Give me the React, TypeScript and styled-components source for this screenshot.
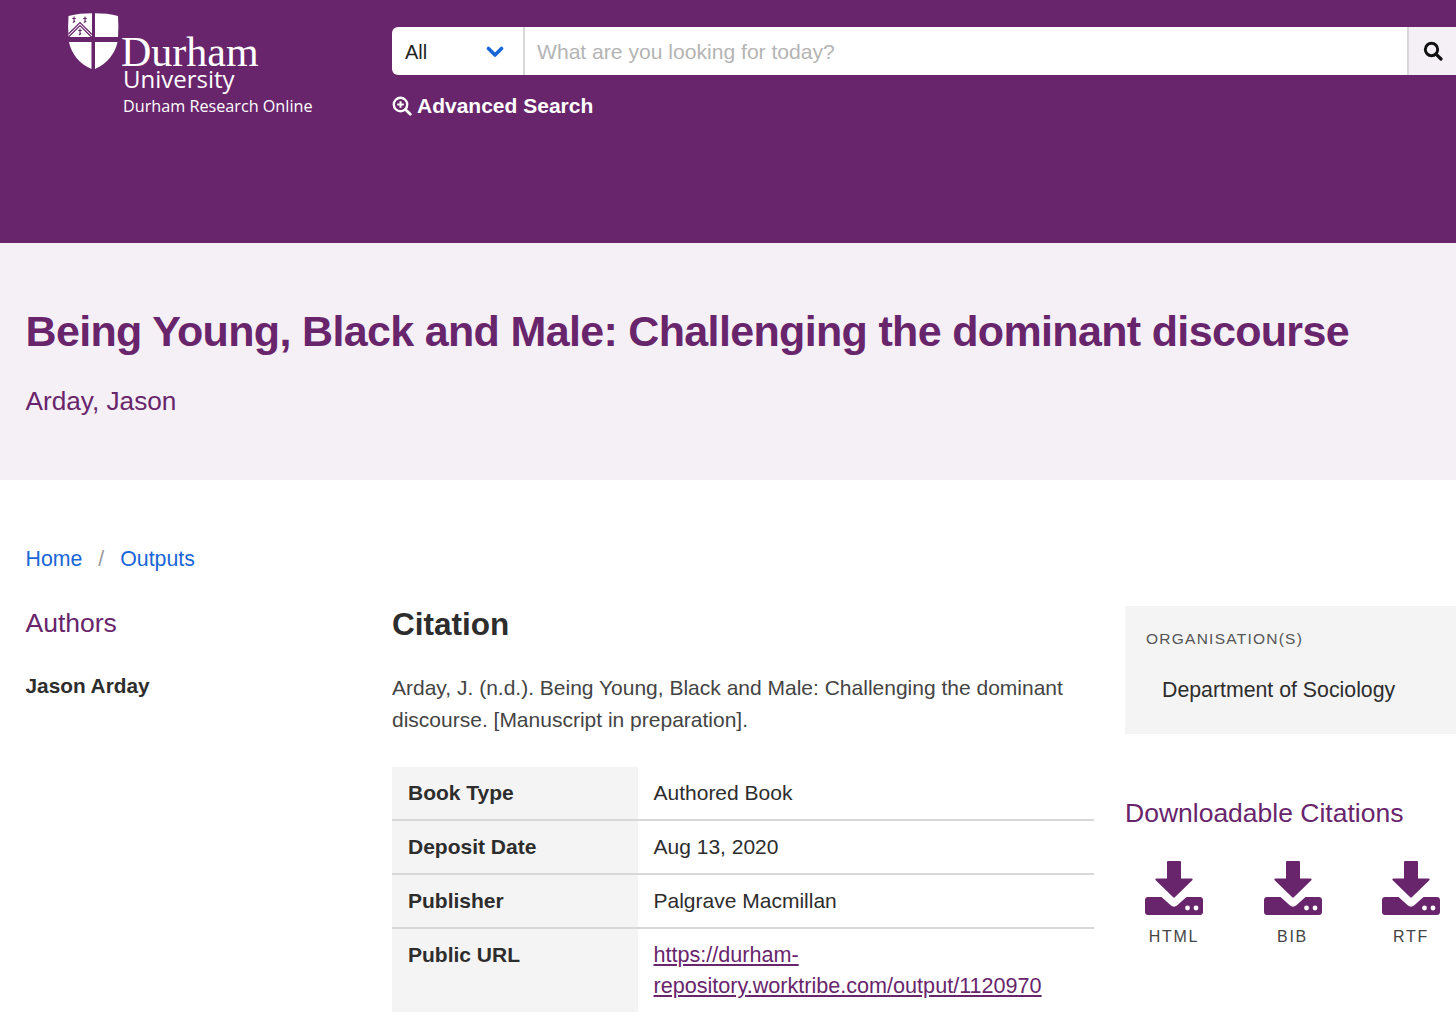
import React, {FC} from 'react';
import styled, {createGlobalStyle} from 'styled-components';

const GlobalStyle = createGlobalStyle`
  html, body {
    margin: 0;
    background: #fff;
    overflow: hidden;
  }

  body {
    color: #2d2d2d;
    font-family: "Liberation Sans", Arial, sans-serif;
    font-size: 21px;
  }
`;

const Page = styled.div`
  height: 1028px;
  overflow: hidden;
  width: 1456px;
`;

const Header = styled.header`
  background: #68256c;
  box-sizing: border-box;
  display: flex;
  height: 243px;
`;

const LogoLink = styled.a`
  box-sizing: border-box;
  display: block;
  flex: none;
  padding: 13px 0 0 68px;
  width: 392px;
`;

const LogoRow = styled.div`
  display: flex;
`;

const LogoText = styled.div`
  color: #fff;
  margin-left: 2px;
`;

const LogoName = styled.div`
  font-family: "Liberation Serif", serif;
  font-size: 42px;
  line-height: 32px;
  margin-top: 23px;
`;

const LogoUniversity = styled.div`
  font-family: "Open Sans", sans-serif;
  font-size: 24px;
  line-height: 26px;
  margin: -2px 0 0 2px;
`;

const LogoSub = styled.div`
  font-family: "Open Sans", sans-serif;
  font-size: 16.2px;
  line-height: 20px;
  margin: 4px 0 0 2px;
  white-space: nowrap;
`;

const SearchArea = styled.div`
  flex: 1;
  min-width: 0;
  padding-top: 27px;
`;

const SearchBar = styled.form`
  background: #fff;
  border-radius: 6px 0 0 6px;
  display: flex;
  height: 48px;
  margin: 0;
`;

const CategorySelect = styled.div`
  align-items: center;
  border-right: 2px solid #d8d8d8;
  box-sizing: border-box;
  color: #222;
  display: flex;
  flex: none;
  font-size: 20px;
  justify-content: space-between;
  padding: 2px 19px 0 13px;
  width: 133px;
`;

const SearchInput = styled.div`
  align-items: center;
  color: #b4b4b4;
  display: flex;
  flex: 1;
  font-size: 21.1px;
  padding: 2px 0 0 12px;
`;

const SearchButton = styled.button`
  align-items: center;
  background: #f5f0f6;
  border: none;
  border-left: 2px solid #d8d8d8;
  display: flex;
  flex: none;
  height: 48px;
  justify-content: center;
  padding: 0;
  width: 49px;
`;

const AdvancedLink = styled.a`
  align-items: center;
  color: #fff;
  display: flex;
  font-size: 21px;
  font-weight: 700;
  gap: 5px;
  margin-top: 19px;
`;

const Hero = styled.section`
  background: #f5f0f6;
  box-sizing: border-box;
  height: 237px;
  padding: 61px 25.5px 0;
`;

const Title = styled.h1`
  color: #68256c;
  font-size: 43px;
  font-weight: 700;
  letter-spacing: -0.66px;
  line-height: 54px;
  margin: 0;
  white-space: nowrap;
`;

const HeroAuthor = styled.div`
  color: #68256c;
  font-size: 26.2px;
  line-height: 32px;
  margin-top: 27px;
`;

const Breadcrumbs = styled.nav`
  align-items: center;
  display: flex;
  font-size: 21.3px;
  line-height: 28px;
  padding: 65px 0 0 25.5px;
`;

const Crumb = styled.a`
  color: #1a66d6;
`;

const CrumbDivider = styled.span`
  color: #9a9a9a;
  margin: 0 16px;
`;

const Columns = styled.div`
  display: grid;
  grid-template-columns: 366.5px 733px 1fr;
  padding: 34px 0 0 25.5px;
`;

const LeftColumn = styled.aside``;

const SideHeading = styled.h2`
  color: #68256c;
  font-size: 26.5px;
  font-weight: 400;
  line-height: 32px;
  margin: 0;
`;

const AuthorName = styled.div`
  color: #2d2d2d;
  font-size: 20.8px;
  font-weight: 700;
  line-height: 28px;
  margin-top: 33px;
`;

const MainColumn = styled.main`
  min-width: 0;
`;

const CitationHeading = styled.h2`
  color: #2d2d2d;
  font-size: 31.5px;
  font-weight: 700;
  line-height: 38px;
  margin: -2px 0 0;
`;

const CitationText = styled.p`
  color: #444;
  font-size: 21px;
  line-height: 32px;
  margin: 29px 0 31px;
  width: 690px;
`;

const DetailTable = styled.div`
  display: grid;
  grid-template-columns: 245.5px 456.5px;
`;

const DetailLabel = styled.div<{$last?: boolean}>`
  background: #f4f4f4;
  border-bottom: ${props => (props.$last ? 'none' : '2px solid #d8d8d8')};
  box-sizing: border-box;
  color: #2d2d2d;
  font-size: 21px;
  font-weight: 700;
  line-height: 31px;
  padding: 10px 16px 11px;
`;

const DetailValue = styled.div<{$last?: boolean}>`
  border-bottom: ${props => (props.$last ? 'none' : '2px solid #d8d8d8')};
  box-sizing: border-box;
  color: #2d2d2d;
  font-size: 21px;
  line-height: 31px;
  padding: 10px 16px 11px;
`;

const DetailLink = styled.a`
  color: #68256c;
  font-size: 21.6px;
  text-decoration: underline;
`;

const RightColumn = styled.aside`
  min-width: 0;
`;

const OrgBox = styled.div`
  background: #f4f4f4;
  box-sizing: border-box;
  height: 128px;
  margin-top: -1px;
  padding: 23px 21px 0;
  width: 340px;
`;

const OrgLabel = styled.div`
  color: #555;
  font-size: 15.5px;
  letter-spacing: 1.25px;
  line-height: 20px;
`;

const OrgName = styled.div`
  color: #2d2d2d;
  font-size: 21.3px;
  line-height: 28px;
  margin: 27px 0 0 16px;
`;

const DownloadHeading = styled(SideHeading)`
  margin-top: 63px;
`;

const DownloadRow = styled.div`
  display: flex;
  margin: 32px 0 0 20px;
`;

const DownloadItem = styled.a`
  align-items: center;
  color: #444;
  display: flex;
  flex-direction: column;
  font-size: 16px;
  letter-spacing: 1.7px;
  line-height: 20px;
  width: 58px;

  & + & {
    margin-left: 60.5px;
  }
`;

const DownloadName = styled.span`
  margin-top: 12px;
`;

const Shield: FC = () => (
  <svg width="51" height="57" viewBox="0 0 51 57" aria-hidden="true">
    <path d="M.5 3C8 1 16 .3 24 .3V24H.5C0 17 0 10 .5 3Z" fill="#fff" />
    <path d="M27 .3C35 .3 43 1 50 3C50.5 10 50.5 17 50 24H27V.3Z" fill="#fff" />
    <path d="M1 29H23.5V56C11 50.5 3.5 41 1 29Z" fill="#fff" />
    <path d="M27 29H49.5C47 41 39 50.5 27 56V29Z" fill="#fff" />
    <path d="M.5 21L12 9.5L24 21.5" fill="none" stroke="#68256c" strokeWidth="1.2" />
    <path d="M.5 24L12 12.5L24 24.5" fill="none" stroke="#68256c" strokeWidth="1.2" />
    <path d="M6 3.5V9.5M4.2 5.5H7.8M4.8 9.5L7.2 8.2M17 3.5V9.5M15.2 5.5H18.8M15.8 9.5L18.2 8.2M12 15.5V22M10.2 17.5H13.8M10.8 22L13.2 20.5" fill="none" stroke="#68256c" strokeWidth="1.1" />
  </svg>
);

const ZoomPlusIcon: FC = () => (
  <svg width="20" height="20" viewBox="0 0 20 20" aria-hidden="true">
    <circle cx="8.5" cy="8.5" r="6.7" fill="none" stroke="#fff" strokeWidth="2.4" />
    <path d="M13.5 13.5L18.3 18.3" stroke="#fff" strokeWidth="2.8" strokeLinecap="round" />
    <path d="M8.5 5.2V11.8M5.2 8.5H11.8" stroke="#fff" strokeWidth="2" />
  </svg>
);

const ChevronIcon: FC = () => (
  <svg width="18" height="12" viewBox="0 0 18 12" aria-hidden="true">
    <path d="M2.5 2.5L9 9L15.5 2.5" fill="none" stroke="#1a66d6" strokeWidth="3.6" strokeLinecap="round" strokeLinejoin="round" />
  </svg>
);

const SearchIcon: FC = () => (
  <svg width="20" height="20" viewBox="0 0 20 20" aria-hidden="true">
    <circle cx="8.5" cy="8.5" r="6.2" fill="none" stroke="#111" strokeWidth="2.9" />
    <path d="M13.3 13.3L18 18" stroke="#111" strokeWidth="3.2" strokeLinecap="round" />
  </svg>
);

const DownloadIcon: FC = () => (
  <svg width="58" height="54" viewBox="0 0 58 54" aria-hidden="true">
    <path d="M23 0H35A1 1 0 0 1 36 1V17.5H46.5C47.5 17.5 48 18.5 47.3 19.3L29.8 36.3C29.3 36.8 28.7 36.8 28.2 36.3L10.7 19.3C10 18.5 10.5 17.5 11.5 17.5H22V1A1 1 0 0 1 23 0Z" fill="#68256c" />
    <path d="M3 36H16.5L26 44.5C27.8 46 30.2 46 32 44.5L41.5 36H55C56.7 36 58 37.3 58 39V51C58 52.7 56.7 54 55 54H3C1.3 54 0 52.7 0 51V39C0 37.3 1.3 36 3 36Z" fill="#68256c" />
    <circle cx="42.5" cy="47" r="2.4" fill="#fff" />
    <circle cx="51" cy="47" r="2.4" fill="#fff" />
  </svg>
);

const citationFormats = ['HTML', 'BIB', 'RTF'];

export default function App() {
  return (
    <Page>
      <GlobalStyle />
      <Header>
        <LogoLink>
          <LogoRow>
            <Shield />
            <LogoText>
              <LogoName>Durham</LogoName>
              <LogoUniversity>University</LogoUniversity>
              <LogoSub>Durham Research Online</LogoSub>
            </LogoText>
          </LogoRow>
        </LogoLink>
        <SearchArea>
          <SearchBar>
            <CategorySelect>
              All
              <ChevronIcon />
            </CategorySelect>
            <SearchInput>What are you looking for today?</SearchInput>
            <SearchButton type="button" aria-label="Search">
              <SearchIcon />
            </SearchButton>
          </SearchBar>
          <AdvancedLink>
            <ZoomPlusIcon />
            Advanced Search
          </AdvancedLink>
        </SearchArea>
      </Header>
      <Hero>
        <Title>Being Young, Black and Male: Challenging the dominant discourse</Title>
        <HeroAuthor>Arday, Jason</HeroAuthor>
      </Hero>
      <Breadcrumbs>
        <Crumb>Home</Crumb>
        <CrumbDivider>/</CrumbDivider>
        <Crumb>Outputs</Crumb>
      </Breadcrumbs>
      <Columns>
        <LeftColumn>
          <SideHeading>Authors</SideHeading>
          <AuthorName>Jason Arday</AuthorName>
        </LeftColumn>
        <MainColumn>
          <CitationHeading>Citation</CitationHeading>
          <CitationText>
            Arday, J. (n.d.). Being Young, Black and Male: Challenging the dominant discourse. [Manuscript in preparation].
          </CitationText>
          <DetailTable>
            <DetailLabel>Book Type</DetailLabel>
            <DetailValue>Authored Book</DetailValue>
            <DetailLabel>Deposit Date</DetailLabel>
            <DetailValue>Aug 13, 2020</DetailValue>
            <DetailLabel>Publisher</DetailLabel>
            <DetailValue>Palgrave Macmillan</DetailValue>
            <DetailLabel $last>Public URL</DetailLabel>
            <DetailValue $last>
              <DetailLink>https://durham-repository.worktribe.com/output/1120970</DetailLink>
            </DetailValue>
          </DetailTable>
        </MainColumn>
        <RightColumn>
          <OrgBox>
            <OrgLabel>ORGANISATION(S)</OrgLabel>
            <OrgName>Department of Sociology</OrgName>
          </OrgBox>
          <DownloadHeading>Downloadable Citations</DownloadHeading>
          <DownloadRow>
            {citationFormats.map(format => (
              <DownloadItem key={format}>
                <DownloadIcon />
                <DownloadName>{format}</DownloadName>
              </DownloadItem>
            ))}
          </DownloadRow>
        </RightColumn>
      </Columns>
    </Page>
  );
}
